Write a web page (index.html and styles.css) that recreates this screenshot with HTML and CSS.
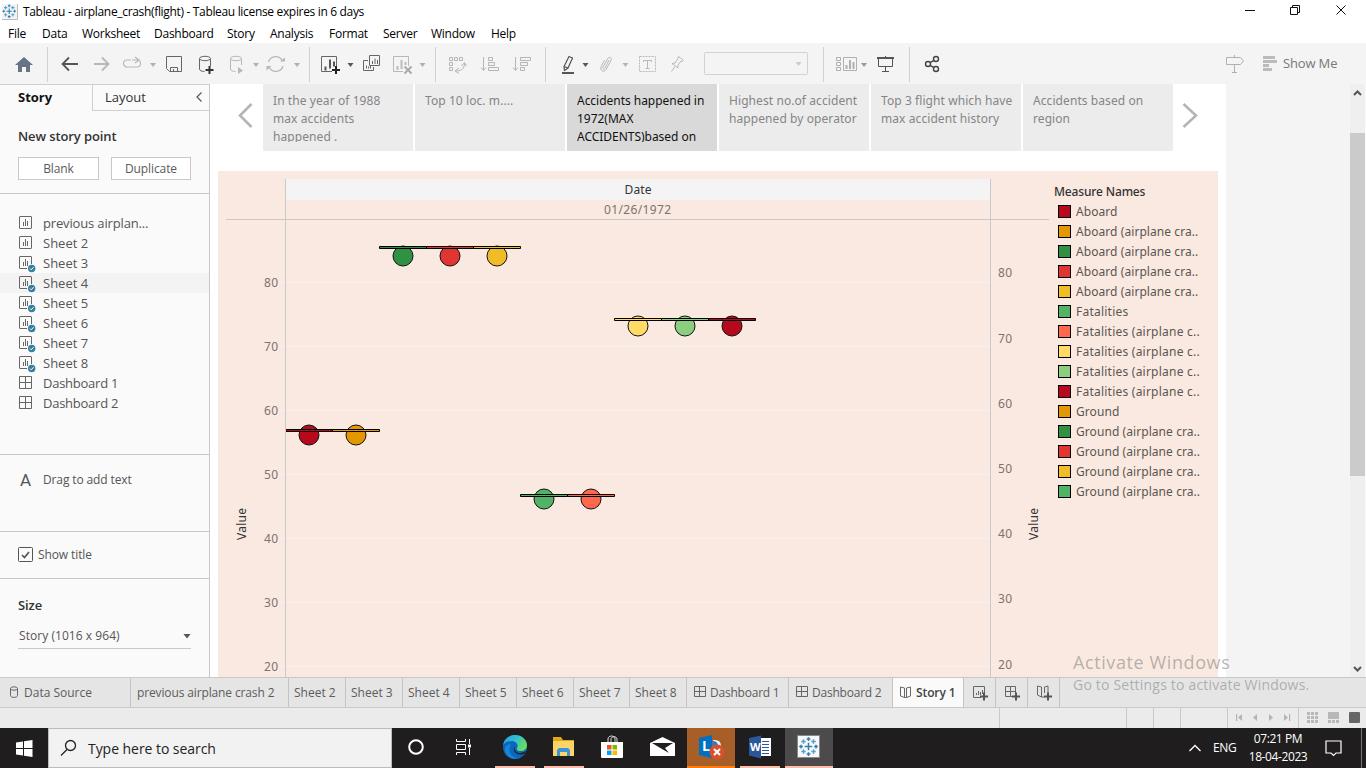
FILE: index.html
```html
<!DOCTYPE html>
<html lang="en">
<head>
<meta charset="utf-8">
<title>Tableau - airplane_crash(flight)</title>
<link rel="stylesheet" href="styles.css">
</head>
<body>
<svg class="defs" width="0" height="0">
  <defs>
    <path id="caret" d="M0 0h6l-3 4z"/>
    <g id="tableau" fill="none" stroke-width="1.2">
      <path stroke="#2f7fb5" d="M8 5v6M5 8h6M8 .5v3M6.500 2h3M8 12.500v3M6.500 14h3M.5 8h3M2 6.500v3M12.500 8h3M14 6.500v3"/>
      <path stroke="#5aa0c8" d="M4 2.200v3.600M2.200 4h3.600M12 2.200v3.600M10.200 4h3.600M4 10.200v3.600M2.200 12h3.600M12 10.200v3.600M10.200 12h3.600"/>
    </g>
    <g id="sheet" fill="none" stroke="#666">
      <rect x=".5" y=".5" width="12" height="12" rx=".5"/>
      <path d="M4.500 6v4M6.500 3v7M8.500 5v5"/>
    </g>
    <g id="used">
      <use href="#sheet"/>
      <circle cx="12.700" cy="12.500" r="4.600" fill="#fafafa"/>
      <circle cx="12.700" cy="12.500" r="3.700" fill="#367f9f"/>
      <path d="M10.900 12.500l1.300 1.300 2.400-2.600" fill="none" stroke="#fff"/>
    </g>
    <path id="dash" d="M.5.5h12v12H.5zM6.500.5v12M.5 6.500h12" fill="none" stroke="#666"/>
    <path id="book" d="M.5 1l4 1v9.500l-4-1.500zM10.500 1l-4 1v9.500l4-1.500zM4.500 11.500h2" fill="none" stroke="#666"/>
    <path id="plus" d="M0 3.500h8M4-.5v8" fill="none" stroke="#555" stroke-width="2"/>
  </defs>
</svg>
<div class="app">
  <header class="titlebar">
    <svg class="logo" width="16" height="16"><rect width="16" height="16" fill="#f4f4f4"/><use href="#tableau" transform="scale(.9)"/><path d="M15.500 0v15.500H0" fill="none" stroke="#bbb"/></svg>
    <h1 class="title">Tableau - airplane_crash(flight) - Tableau license expires in 6 days</h1>
    <svg class="winctl" width="120" height="24" viewBox="1240 0 120 24" fill="none" stroke="#111">
      <path d="M1245 10.500h10M1336.500 5.500l9 9M1345.500 5.500l-9 9"/><path d="M1290.500 7.500h7v7h-7zM1292.500 7.500v-2h7v7h-2"/>
    </svg>
  </header>
  <nav class="menu"><a class="m-file">File</a><a class="m-data">Data</a><a class="m-work">Worksheet</a><a class="m-dash">Dashboard</a><a class="m-story">Story</a><a class="m-ana">Analysis</a><a class="m-form">Format</a><a class="m-serv">Server</a><a class="m-win">Window</a><a>Help</a></nav>

  <div class="toolbar">
    <svg class="tg" width="47" height="41" viewBox="0 43 47 41"><path d="M24 57l9 8h-3v7h-4v-5h-4v5h-4v-7h-3z" fill="#667485"/></svg>
    <svg class="tg" width="262" height="41" viewBox="47 43 262 41" fill="none" stroke="#b8b8b8">
      <path d="M69 57.500l-6.500 6.500 6.500 6.500M62.500 64H78" stroke="#555" stroke-width="1.800"/>
      <path d="M102 57.500l6.500 6.500-6.500 6.500M108.500 64H94" stroke-width="1.800"/>
      <path d="M131 60h-4a3.500 3.500 0 0 0 0 7h10a3.400 3.400 0 0 0 0-7h-5M135 57l4 3-4 3" stroke-width="1.200"/>
      <path d="M166.500 56.500h15v15h-12l-3-3zM170.500 71.500v-4h7v4M173.500 69v2" stroke="#666"/>
      <path d="M199.500 59v10c0 1.500 2 2.500 5 2.500M210.500 59v7" stroke="#666"/><ellipse cx="205" cy="58.500" rx="5.500" ry="2.200" stroke="#666"/><path d="M205.500 70h8M209.500 66v8" stroke="#333" stroke-width="2"/>
      <path d="M230.500 59v10c0 1.500 2 2.500 5 2.500M241.500 59v6"/><ellipse cx="236" cy="58.500" rx="5.500" ry="2.200"/><path d="M238 67l5 3.500-5 3.500z" fill="#b8b8b8" stroke="none"/>
      <path d="M268.500 62a7.500 7.500 0 0 1 14-1M283 66a7.500 7.500 0 0 1-14 1" stroke-width="1.300"/><path d="M280 61.500h5v-4zM271.500 66h-5v4.500z" fill="#b8b8b8" stroke="none"/>
      <g fill="#b0b0b0" stroke="none"><use href="#caret" x="150" y="63"/><use href="#caret" x="253" y="63"/><use href="#caret" x="294" y="63"/></g>
    </svg>
    <svg class="tg" width="126" height="41" viewBox="309 43 126 41" fill="none" stroke="#666">
      <path d="M332 71.500h-10.500v-15h15V68"/><path d="M325.500 66.500v4M330 59.500v9M334 61.500v5" stroke="#555" stroke-width="2"/><path d="M332 70h8M336 66v8" stroke="#222" stroke-width="2"/>
      <path d="M369.500 55.500h10v10h-10zM368 60.500h-4.500v10h10V67M372.500 61v3M375 58.500v5.500M377.500 60v4M366.500 65.500v3M368.500 66.500v2M370.500 66v2.500"/>
      <path d="M403 71.500h-9.500v-15h15V66" stroke="#b8b8b8"/><path d="M397.500 66v4M401.500 60v9M405.500 62v3" stroke="#bbb" stroke-width="2"/><path d="M404.500 66.500l7 7M411.500 66.500l-7 7" stroke="#aaa" stroke-width="2"/>
      <use href="#caret" x="347.500" y="63" fill="#555" stroke="none"/><use href="#caret" x="419.500" y="63" fill="#b0b0b0" stroke="none"/>
    </svg>
    <svg class="tg" width="110" height="41" viewBox="435 43 110 41" fill="none" stroke="#b5b5b5">
      <path d="M449.500 57.500h3v3h-3zM454.500 57.500h3v3h-3zM459.500 57.500h3v3h-3zM449.500 62.500h3v3h-3zM449.500 67.500h3v3h-3zM464.500 63.500c0 5-3 7.500-8.500 7.500M461.500 66l3-3.500 2 3.500M459 68l-4 3 4 2.500"/>
      <path d="M483.500 57v13M481 67.500l2.500 3 2.500-3M488.500 57.500h4v3h-4zM488.500 62.500h6v3h-6zM488.500 67.500h10v3h-10z"/>
      <path d="M515.500 57v13M513 67.500l2.500 3 2.500-3M520.500 57.500h10v3h-10zM520.500 62.500h7v3h-7zM520.500 67.500h4v3h-4z"/>
    </svg>
    <svg class="tg" width="278" height="41" viewBox="545 43 278 41" fill="none" stroke="#b8b8b8">
      <path d="M569 56.500l3.500 1.500-4.500 10-3.500 2.500-.500-4zM564 66.500l4 1.500" stroke="#555" stroke-width="1.200"/><path d="M562 73h12" stroke="#555" stroke-width="2"/>
      <path d="M609 60l-4 8c-1 2-3 1-2-1l4.500-8c1.500-3 5-1.500 3.500 1.500l-5 9c-2 3.500-6.500 1-5-2.500l3.500-7"/>
      <rect x="639.500" y="56.500" width="16" height="15" stroke-dasharray="2 1"/><path d="M643.500 62v-1.500h8V62M647.500 60.500v8M645.500 68.500h4"/>
      <path d="M678.500 56.500l5 4-1 1-1.500-.5-3 4v3l-6-4.500 3-.5 3-4.500zM675 66.500l-3.500 5"/>
      <rect x="704.500" y="52.500" width="103" height="22" rx="1" stroke="#d2d2d2"/>
      <g stroke="none" fill="#b5b5b5"><use href="#caret" x="582.500" y="63" fill="#555"/><use href="#caret" x="622.500" y="63"/><use href="#caret" x="795.500" y="62" fill="#ccc"/></g>
    </svg>
    <svg class="tg" width="86" height="41" viewBox="823 43 86 41" fill="none" stroke="#b0b0b0">
      <path d="M836.500 57.500h4v3h-4zM836.500 62.500h4v3h-4zM836.500 67.500h4v3h-4zM843.500 57.500h13v13h-13z"/><path d="M846.500 65v4M850 60v9M853.500 62v7" stroke-width="2"/>
      <use href="#caret" x="861" y="63" fill="#999" stroke="none"/>
      <path d="M877 58h17" stroke="#555" stroke-width="2"/><path d="M878.500 59v7.500h14V59M885.500 56v2M885.500 66.500v5M882 71.500h7" stroke="#555"/>
    </svg>
    <svg class="tg" width="40" height="41" viewBox="909 43 40 41" fill="none" stroke="#444" stroke-width="1.400"><circle cx="928" cy="64" r="2.500"/><circle cx="936" cy="59" r="2.500"/><circle cx="936" cy="69" r="2.500"/><path d="M930.200 62.700l3.700-2.400M930.200 65.300l3.700 2.400"/></svg>
    <svg class="sign" width="57" height="41" viewBox="1222 43 57 41" fill="none" stroke="#b0b0b0"><path d="M1226.500 57.500h14l3 3.500-3 3.500h-14zM1234.500 55v2M1234.500 64.500v8M1232 72.500h5"/><path d="M1263 57.500h12M1263 61.500h14M1263 65.500h6M1263 69.500h9" stroke="#bbb" stroke-width="3"/></svg>
    <span class="showme">Show Me</span>
  </div>

  <main class="work">
    <aside class="side">
      <div class="sidetabs"><b class="on">Story</b><span class="off">Layout<svg width="8" height="12" fill="none" stroke="#555" stroke-width="1.200"><path d="M6.500 1.500l-4.500 4.500 4.500 4.500"/></svg></span></div>
      <section class="newpoint"><h2>New story point</h2><div class="btns"><button class="blank">Blank</button><button>Duplicate</button></div></section>
      <ul class="sheets">
        <li><svg width="17" height="18"><use href="#sheet" y="1"/></svg>previous airplan...</li>
        <li><svg width="17" height="18"><use href="#sheet" y="1"/></svg>Sheet 2</li>
        <li><svg width="17" height="18"><use href="#used" y="1"/></svg>Sheet 3</li>
        <li class="hover"><svg width="17" height="18"><use href="#used" y="1"/></svg>Sheet 4</li>
        <li><svg width="17" height="18"><use href="#used" y="1"/></svg>Sheet 5</li>
        <li><svg width="17" height="18"><use href="#used" y="1"/></svg>Sheet 6</li>
        <li><svg width="17" height="18"><use href="#used" y="1"/></svg>Sheet 7</li>
        <li><svg width="17" height="18"><use href="#used" y="1"/></svg>Sheet 8</li>
        <li><svg width="17" height="18"><use href="#dash" y="1"/></svg>Dashboard 1</li>
        <li><svg width="17" height="18"><use href="#dash" y="1"/></svg>Dashboard 2</li>
      </ul>
      <section class="addtext"><b>A</b><span>Drag to add text</span></section>
      <section class="showtitle"><svg width="15" height="15" fill="none" stroke="#555"><rect x=".5" y=".5" width="14" height="14" rx="1"/><path d="M4 8l2.500 2.500L11 5" stroke-width="1.700"/></svg>Show title</section>
      <section class="size"><h2>Size</h2><div class="select">Story (1016 x 964)<svg width="8" height="5"><path d="M.5 0h7L4 4.500z" fill="#555"/></svg></div></section>
    </aside>

    <div class="canvas">
      <div class="points">
        <svg class="prev" width="18" height="26" fill="none" stroke="#b5b5b5" stroke-width="2.600"><path d="M15.500 2L4 13.500 15.500 25"/></svg>
        <div class="pt"><p>In the year of 1988<br>max accidents<br>happened .</p></div>
        <div class="pt"><p>Top 10 loc. m....</p></div>
        <div class="pt cur"><p>Accidents happened in<br>1972(MAX<br>ACCIDENTS)based on</p></div>
        <div class="pt"><p>Highest no.of accident<br>happened by operator</p></div>
        <div class="pt"><p>Top 3 flight which have<br>max accident history</p></div>
        <div class="pt"><p>Accidents based on<br>region</p></div>
        <svg class="next" width="20" height="26" fill="none" stroke="#b5b5b5" stroke-width="2.600"><path d="M3.500 2L16 13.500 3.500 25"/></svg>
      </div>
      <div class="viz">
        <svg class="chart" width="832" height="506" viewBox="218 171 832 506">
          <rect x="286" y="179" width="704" height="20" fill="#f4f4f4"/>
          <path d="M286 199.500h704M281 282.500h709M281 346.500h709M281 410.500h709M281 474.500h709M281 538.500h709M281 602.500h709M281 666.500h709M991 272.500h4M991 338.500h4M991 403.500h4M991 468.500h4M991 533.500h4M991 598.500h4M991 664.500h4" stroke="#f2f2f2"/>
          <path d="M226 219.500h823M285.500 179v498M990.500 179v498" stroke="#c9c9c9"/>
          <g class="strong"><text x="624.500" y="194" textLength="27">Date</text>
            <text transform="translate(246 540) rotate(-90)" textLength="32">Value</text><text transform="translate(1038 540) rotate(-90)" textLength="32">Value</text></g>
          <g class="axis"><text x="604" y="214" textLength="67">01/26/1972</text>
            <text x="264" y="287" textLength="14">80</text><text x="264" y="351" textLength="14">70</text><text x="264" y="415" textLength="14">60</text><text x="264" y="479" textLength="14">50</text><text x="264" y="543" textLength="14">40</text><text x="264" y="607" textLength="14">30</text><text x="264" y="671" textLength="14">20</text>
            <text x="998" y="277" textLength="14">80</text><text x="998" y="343" textLength="14">70</text><text x="998" y="408" textLength="14">60</text><text x="998" y="473" textLength="14">50</text><text x="998" y="538" textLength="14">40</text><text x="998" y="603" textLength="14">30</text><text x="998" y="669" textLength="14">20</text></g>
          <g stroke="#111">
            <circle cx="403" cy="256" r="10" fill="#309143"/><circle cx="450" cy="256" r="10" fill="#e03531"/><circle cx="497" cy="256" r="10" fill="#f0bd27"/>
            <circle cx="638" cy="326" r="10" fill="#ffda66"/><circle cx="685" cy="326" r="10" fill="#8ace7e"/><circle cx="732" cy="326" r="10" fill="#b60a1c"/>
            <circle cx="309" cy="435" r="10" fill="#b60a1c"/><circle cx="356" cy="435" r="10" fill="#e39802"/>
            <circle cx="544" cy="499" r="10" fill="#51b364"/><circle cx="591" cy="499" r="10" fill="#ff684c"/>
          </g>
          <g stroke="#000">
            <path d="M379.500 246.500h47v2h-47z" fill="#309143"/><path d="M426.500 246.500h47v2h-47z" fill="#e03531"/><path d="M473.500 246.500h47v2h-47z" fill="#f0bd27"/>
            <path d="M614.500 318.500h47v2h-47z" fill="#ffda66"/><path d="M661.500 318.500h47v2h-47z" fill="#8ace7e"/><path d="M708.500 318.500h47v2h-47z" fill="#b60a1c"/>
            <path d="M286 429.500h46.500v2H286" fill="#b60a1c"/><path d="M332.500 429.500h47v2h-47z" fill="#e39802"/>
            <path d="M520.500 494.500h47v2h-47z" fill="#51b364"/><path d="M567.500 494.500h47v2h-47z" fill="#ff684c"/>
          </g>
        </svg>
        <div class="legend">
          <h3>Measure Names</h3>
          <ul>
            <li><i class="c1"></i>Aboard</li><li><i class="c2"></i>Aboard (airplane cra..</li><li><i class="c3"></i>Aboard (airplane cra..</li><li><i class="c4"></i>Aboard (airplane cra..</li><li><i class="c5"></i>Aboard (airplane cra..</li>
            <li class="fat"><i class="c6"></i>Fatalities</li><li class="fat"><i class="c7"></i>Fatalities (airplane c..</li><li class="fat"><i class="c8"></i>Fatalities (airplane c..</li><li class="fat"><i class="c9"></i>Fatalities (airplane c..</li><li class="fat"><i class="c1"></i>Fatalities (airplane c..</li>
            <li><i class="c2"></i>Ground</li><li><i class="c3"></i>Ground (airplane cra..</li><li><i class="c4"></i>Ground (airplane cra..</li><li><i class="c5"></i>Ground (airplane cra..</li><li><i class="c6"></i>Ground (airplane cra..</li>
          </ul>
        </div>
      </div>
    </div>
    <div class="gutter"></div>
    <div class="scroll">
      <svg width="15" height="18" fill="none" stroke="#555" stroke-width="2"><path d="M4 11l3.500-3.500L11 11"/></svg>
      <div class="thumb"></div>
      <svg class="down" width="15" height="18" fill="none" stroke="#555" stroke-width="2"><path d="M4 8l3.500 3.500L11 8"/></svg>
    </div>
  </main>

  <div class="tabs">
    <span class="t0"><svg width="9" height="12" fill="none" stroke="#666"><path d="M.5 2.500v7c0 2.500 7 2.500 7 0v-7"/><ellipse cx="4" cy="2.500" rx="3.500" ry="1.700"/></svg>Data Source</span>
    <span class="t1">previous airplane crash 2</span>
    <span class="ts">Sheet 2</span><span class="ts">Sheet 3</span><span class="ts">Sheet 4</span><span class="ts">Sheet 5</span><span class="ts">Sheet 6</span><span class="ts tn">Sheet 7</span><span class="ts">Sheet 8</span>
    <span class="td"><svg width="12" height="12" fill="none" stroke="#666"><path d="M.5.5h11v10H.5zM5.500.5v10M.5 5.500h11"/></svg>Dashboard 1</span>
    <span class="td tw"><svg width="12" height="12" fill="none" stroke="#666"><path d="M.5.5h11v10H.5zM5.500.5v10M.5 5.500h11"/></svg>Dashboard 2</span>
    <span class="tstory"><svg width="12" height="13"><use href="#book"/></svg>Story 1</span>
    <span class="tp"><svg width="17" height="18" fill="none" stroke="#666"><path d="M8 12.500H.5V1.500h11V8M3.500 8v2M5.500 6v4M7.500 7v3M9.500 5v4"/><use href="#plus" x="7" y="8"/></svg></span>
    <span class="tp"><svg width="17" height="18" fill="none" stroke="#666"><path d="M7 11.500H.5V1.500h10V8M5.500 1.500v10M.5 6.500h10"/><use href="#plus" x="7" y="8"/></svg></span>
    <span class="tp"><svg width="17" height="18" fill="none" stroke="#666"><path d="M.5 1l4 1v10l-4-2zM4.500 12h3M7.500 8V2l3.500-1v7"/><use href="#plus" x="7" y="8"/></svg></span>
  </div>
  <div class="status"><span class="s0"></span><span class="s1"></span><span class="s2"></span><span class="s2"></span><span class="s3"></span>
    <svg class="pager" width="70" height="20" viewBox="1228 708 70 20" fill="#b5b5b5"><path d="M1236 714h1.200v7H1236zM1242 714v7l-4-3.500zM1257 714v7l-4-3.500zM1269 714v7l4-3.500zM1284 714v7l4-3.500zM1289 714h1.200v7H1289z"/></svg>
    <svg class="modes" width="67" height="20" viewBox="1299 708 67 20" fill="#b8b8b8"><path d="M1307 712h3v3h-3zM1311 712h3v3h-3zM1315 712h3v3h-3zM1307 716h3v3h-3zM1311 716h3v3h-3zM1315 716h3v3h-3zM1307 720h3v3h-3zM1311 720h3v3h-3zM1315 720h3v3h-3zM1328 712h11v7h-11zM1328 720h3v3h-3zM1332 720h3v3h-3zM1336 720h3v3h-3z"/><rect x="1349" y="712" width="11" height="11" rx="1" fill="#666"/></svg>
  </div>

  <footer class="taskbar">
    <div class="start"><svg width="17" height="17" fill="#fff"><path d="M0 2.500l7-1v6.500H0zM8 1.300L16.500 0v8H8zM0 9h7v6.500l-7-1zM8 9h8.500v8L8 15.700z"/></svg></div>
    <div class="search"><svg width="18" height="18" fill="none" stroke="#222" stroke-width="1.300"><circle cx="10.500" cy="6.500" r="5"/><path d="M7 10.500L1 16.500"/></svg>Type here to search</div>
    <div class="slot"><svg width="18" height="18"><circle cx="9" cy="9" r="6.800" fill="none" stroke="#fff" stroke-width="2"/></svg></div>
    <div class="slot"><svg width="18" height="16" fill="none" stroke="#fff"><path d="M1.500 0v2.500h9V0M1.500 5.500h9v5h-9zM1.500 16v-2.500h9V16M14.500 0v5M14.500 9v7"/><path d="M13 7h3" stroke-width="3"/></svg></div>
    <div class="slot edge run"><svg width="26" height="26" viewBox="0 0 26 26">
      <defs><linearGradient id="eg" x1="0" y1="0" x2="1" y2=".5"><stop offset="0" stop-color="#1b9de2"/><stop offset=".55" stop-color="#35c1d1"/><stop offset="1" stop-color="#66dd5c"/></linearGradient></defs>
      <circle cx="13" cy="13" r="12" fill="#0c66bd"/><path d="M1 12C2 4 8 1 13 1c7 0 12 5 12 10 0 4-3 6-6 6-3.500 0-5-1.500-4-3 2-3-1-7-5-7-5 0-8 2-9 5z" fill="url(#eg)"/><path d="M9 11c-4 5 0 13 8 13.300-8 2-14-3-14-8.300 0-4 3-6.500 6-5z" fill="#1785d8"/><path d="M13 12c-2 5 3 9 9 6l3-1-3 3c-6 2-13-2-9-8z" fill="#1c2226"/></svg></div>
    <div class="slot folder run"><svg width="22" height="20"><path d="M0 0h8l2 3h11v16H0z" fill="#e6a418"/><path d="M0 4h21v15H0z" fill="#fdd567"/><path d="M4 19v-6l2-2h9l2 2v6h-3v-4H7v4z" fill="#3b94dc"/></svg></div>
    <div class="slot"><svg width="24" height="24"><path d="M8 8V4c0-4 7-4 7 0v4M11 8V4c0-3 6-3 6 0v4" fill="none" stroke="#ddd"/><path d="M1 7h22v15q0 1-1 1H2q-1 0-1-1z" fill="#fff"/><path d="M7 10h4.500v4.500H7z" fill="#f25022"/><path d="M12.500 10H17v4.500h-4.500z" fill="#7fba00"/><path d="M7 15.500h4.500V20H7z" fill="#00a4ef"/><path d="M12.500 15.500H17V20h-4.500z" fill="#ffb900"/></svg></div>
    <div class="slot mail"><svg width="25" height="20"><path d="M0 6L12.500 0 25 6v13H0z" fill="#fff"/><path d="M2 6h21l-8 5 4 5-7-4z" fill="#211f1f"/></svg></div>
    <div class="slot lync"><svg width="28" height="26"><path d="M2 4l13-3v23L2 21z" fill="#0070c5"/><text class="app-l" x="5" y="17">L</text><path d="M16 6q8-1 8 6l-4 2-4-2z" fill="#e8f2fa"/><path d="M16 7q4 0 5 4l-5 1z" fill="#1684d6"/><circle cx="20" cy="18" r="7.500" fill="#d9512c"/><path d="M17 15l6 6M23 15l-6 6" stroke="#fff" stroke-width="2"/></svg></div>
    <div class="slot word run"><svg width="24" height="24"><path d="M11 3h12v18H11z" fill="#fff"/><path d="M14 6.500h7M14 9.500h7M14 12.500h7M14 15.500h7M14 18.500h7" stroke="#2b579a"/><path d="M1 3l12-2.500v23L1 20.500z" fill="#2b579a"/><text class="app-w" x="2" y="16" textLength="10">W</text></svg></div>
    <div class="slot tab run"><svg width="24" height="24"><path d="M.5.5h22v22H.5z" fill="#f8f8f8" stroke="#888"/><use href="#tableau" transform="translate(1.500 1.500) scale(1.250)"/></svg></div>
    <div class="tray"><svg width="14" height="8" fill="none" stroke="#fff" stroke-width="1.300"><path d="M1.500 7L7 1.500 12.500 7"/></svg><span class="lang">ENG</span><div class="clock">07:21 PM<br>18-04-2023</div><svg class="note" width="17" height="17" fill="none" stroke="#fff" stroke-width="1.200"><path d="M1 1h15v12h-5l-2.500 2.500L6 13H1z"/></svg></div>
  </footer>
</div>
<div class="watermark"><p>Activate Windows</p><span>Go to Settings to activate Windows.</span></div>
</body>
</html>
```
FILE: styles.css
```css
* { box-sizing: border-box; }
body { margin: 0; width: 1366px; height: 768px; overflow: hidden; font-family: "Open Sans", "Noto Sans", sans-serif; font-size: 12px; color: #4a4a4a; background: #fff; }
h1, h2, h3, p, ul { margin: 0; padding: 0; font-size: inherit; list-style: none; }
svg { display: block; flex: none; }
.defs { position: absolute; }
.app { display: flex; flex-direction: column; height: 768px; }
.titlebar { display: flex; height: 24px; padding: 4px 6px 0 2px; color: #000; }
.title { font-weight: 400; line-height: 16px; margin-left: 5px; letter-spacing: -.33px; white-space: nowrap; }
.winctl { margin: -4px 0 0 auto; }
.menu { display: flex; height: 19px; padding-left: 8px; color: #000; line-height: 20px; letter-spacing: -.25px; }
.m-file { width: 34px; } .m-data { width: 40px; } .m-work { width: 72px; } .m-dash { width: 73px; } .m-story { width: 43px; }
.m-ana { width: 59px; } .m-form { width: 54px; } .m-serv { width: 48px; } .m-win { width: 60px; }
.toolbar { display: flex; height: 41px; background: #f4f4f4; }
.tg + .tg { background: linear-gradient(#d0d0d0, #d0d0d0) 0 4px / 1px 35px no-repeat; }
.sign { margin-left: 273px; }
.showme { margin-left: 4px; line-height: 41px; font-size: 13px; color: #777; white-space: nowrap; letter-spacing: -.15px; }

.work { display: flex; height: 593px; }
.side { width: 210px; background: #fafafa; border-right: 1px solid #c8c8c8; }
.sidetabs { display: flex; height: 27px; font-size: 13px; line-height: 24px; border-top: 1px solid #d0d0d0; }
.on { width: 92px; padding-left: 18px; color: #111; letter-spacing: 0; }
.off { flex: 1; display: flex; justify-content: space-between; padding: 0 6px 0 12px; color: #333; border: solid #d0d0d0; border-width: 0 0 1px 1px; }
.off svg { margin-top: 6px; }
.newpoint { height: 83px; padding: 16px 18px 0; border-bottom: 1px solid #c8c8c8; }
.side h2 { font-size: 13px; line-height: 18px; color: #333; font-weight: 600; letter-spacing: -.1px; }
.btns { display: flex; gap: 12px; margin-top: 12px; }
.btns button { width: 80px; height: 23px; padding: 0; border: 1px solid #c8c8c8; background: #fff; font: 12px/19px "Open Sans", sans-serif; color: #5a5a5a; letter-spacing: -.1px; }
.btns .blank { width: 81px; }
.sheets { height: 261px; padding-top: 19px; border-bottom: 1px solid #c8c8c8; }
.sheets li { display: flex; gap: 7px; height: 20px; padding-left: 19px; font-size: 13px; line-height: 20px; letter-spacing: -.15px; color: #555; }
.sheets li:nth-child(n+2) { letter-spacing: 0; }
.sheets li:nth-child(n+9) { letter-spacing: -.25px; }
.sheets svg { margin-top: 2px; }
.sheets .hover { background: #f3f3f3; }
.addtext { display: flex; height: 77px; padding: 16px 0 0 20px; gap: 12px; line-height: 18px; letter-spacing: -.12px; color: #555; border-bottom: 1px solid #c8c8c8; }
.addtext b { width: 11px; font: 400 17px/18px Roboto, sans-serif; color: #555; }
.showtitle { display: flex; height: 47px; padding: 15px 0 0 18px; gap: 5px; line-height: 16px; letter-spacing: -.1px; color: #555; border-bottom: 1px solid #c8c8c8; }
.size { padding: 17px 18px 0; }
.select { display: flex; justify-content: space-between; height: 26px; margin-top: 9px; padding-left: 1px; line-height: 25px; border-bottom: 1px solid #c8c8c8; color: #555; letter-spacing: .05px; }
.select svg { margin-top: 11px; }

.canvas { width: 1016px; background: #fff; }
.points { display: flex; gap: 2px; height: 67px; padding-left: 26px; font-family: "Noto Sans", sans-serif; color: #858585; }
.prev { margin: 18px 7px 0 0; }
.next { margin: 18px 0 0 5px; }
.pt { width: 150px; height: 67px; padding: 8px 0 0 10px; background: #ececec; white-space: nowrap; letter-spacing: .08px; }
.pt p { height: 50px; overflow: hidden; line-height: 18px; }
.pt.cur { background: #d9d9d9; color: #111; letter-spacing: -.03px; }
.viz { display: flex; width: 1000px; height: 506px; margin: 20px 0 0 8px; background: #fae9e0; font-family: "Noto Sans", sans-serif; }
.chart text { font-size: 12px; }
.axis { fill: #7b7370; }
.strong { fill: #333; }
.legend { padding: 12px 0 0 4px; white-space: nowrap; }
.legend h3 { font-weight: 500; line-height: 18px; color: #333; letter-spacing: -.15px; }
.legend li { display: flex; align-items: center; gap: 5px; height: 20px; padding-left: 4px; color: #5a5652; letter-spacing: .07px; }
.legend .fat { letter-spacing: .23px; }
.legend i { width: 13px; height: 13px; border: 1px solid #000; }
.c1 { background: #b60a1c; } .c2 { background: #e39802; } .c3 { background: #309143; } .c4 { background: #e03531; } .c5 { background: #f0bd27; }
.c6 { background: #51b364; } .c7 { background: #ff684c; } .c8 { background: #ffda66; } .c9 { background: #8ace7e; }
.gutter { width: 124px; background: #f4f4f4; }
.scroll { display: flex; flex-direction: column; width: 16px; background: #efefef; border-right: 1px solid #fafafa; }
.thumb { height: 343px; margin-top: 31px; background: #cbcbcb; }
.down { margin-top: auto; }

.tabs { display: flex; height: 31px; background: #e5e5e5; border: solid #c9c9c9; border-width: 1px 0; line-height: 29px; color: #5c5c5c; white-space: nowrap; }
.tabs span { display: flex; border-right: 1px solid #c4c4c4; letter-spacing: -.2px; }
.tabs svg { margin-top: 8px; }
.tabs .t0 { width: 131px; padding-left: 10px; gap: 5px; letter-spacing: 0; }
.tabs .t1 { width: 158px; padding-left: 6px; letter-spacing: -.13px; }
.tabs .ts { width: 57px; padding-left: 5px; letter-spacing: 0; }
.tabs .tn { width: 56px; }
.tabs .td { width: 102px; padding-left: 7px; gap: 4px; letter-spacing: -.22px; }
.tabs .tw { width: 104px; }
.tabs .tstory { width: 71px; padding-left: 7px; gap: 4px; background: #fafafa; font-weight: 600; color: #444; letter-spacing: -.1px; }
.tabs .tp { width: 32px; padding-left: 9px; }
.tabs .tp svg { margin-top: 7px; }
.status { display: flex; height: 20px; background: #ebebeb; }
.status > * { border-right: 1px solid #c9c9c9; }
.s0 { width: 1000px; } .s1 { width: 127px; } .s2 { width: 27px; } .s3 { width: 47px; }
.pager { width: 71px; }
.status .modes { border: 0; }

.taskbar { display: flex; height: 40px; background: #1f1d1d; color: #fff; }
.start { width: 48px; padding: 12px 0 0 16px; }
.search { display: flex; align-items: center; gap: 10px; width: 344px; padding-left: 11px; background: #f2f2f2; border: 1px solid #bbb; color: #222; font-size: 14px; letter-spacing: -.05px; }
.slot { display: flex; align-items: center; justify-content: center; width: 48px; height: 40px; border-bottom: 2px solid transparent; }
.run { border-bottom-color: #f9bda9; }
.edge { width: 40px; margin-left: 7px; }
.folder { width: 40px; margin: 0 4px 0 9px; }
.mail { margin-left: 2px; }
.lync { margin-left: 1px; background: #a75e27; border-bottom-color: #ff7b0a; }
.word { width: 40px; margin: 0 5px; }
.tab { background: #4c4a4a; }
.app-l, .app-w { fill: #fff; font: 700 14px "Open Sans", sans-serif; }
.app-w { font-size: 11px; }
.tray { display: flex; flex: 1; height: 40px; margin: 0 4px 0 355px; border-right: 1px solid #777; letter-spacing: -.4px; }
.tray svg { margin-top: 16px; }
.lang { width: 24px; margin-left: 11px; line-height: 40px; }
.clock { width: 60px; margin-left: 11px; padding-top: 2px; line-height: 18px; text-align: center; white-space: nowrap; }
.tray .note { margin: 12px 0 0 17px; }
.watermark { position: absolute; left: 1073px; top: 650px; color: rgba(125, 125, 125, .55); white-space: nowrap; font-size: 14px; }
.watermark p { font-size: 18px; line-height: 25px; letter-spacing: .6px; }
.watermark span { display: block; line-height: 20px; letter-spacing: .2px; }
```
